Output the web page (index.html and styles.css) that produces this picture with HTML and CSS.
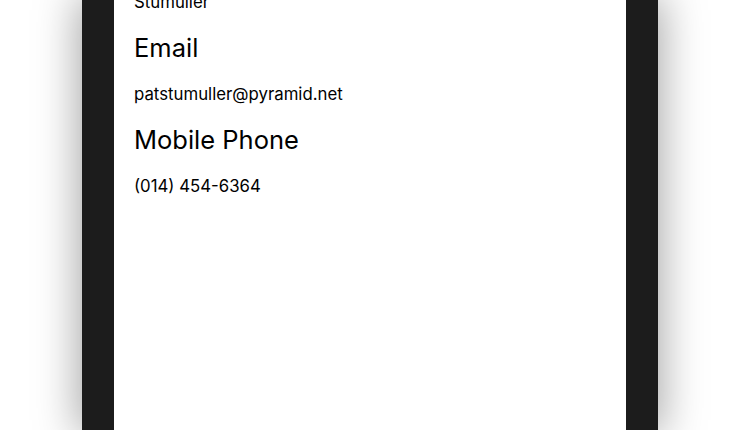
FILE: index.html
```html
<!DOCTYPE html>
<html lang="en">
<head>
<meta charset="utf-8">
<title>Contact</title>
<link rel="stylesheet" href="styles.css">
</head>
<body>
<div class="device">
  <div class="screen">
    <dl class="details">
      <dd class="first">Stumuller</dd>
      <dt>Email</dt>
      <dd>patstumuller@pyramid.net</dd>
      <dt>Mobile Phone</dt>
      <dd>(014) 454-6364</dd>
    </dl>
  </div>
</div>
</body>
</html>
```

FILE: styles.css
```css
html, body {
  margin: 0;
  padding: 0;
  background: #ffffff;
  height: 100%;
  overflow: hidden;
}

body {
  display: flex;
  justify-content: center;
  font-family: "Inter", "Noto Sans", sans-serif;
  color: #000;
}

.device {
  box-sizing: border-box;
  width: 576px;
  height: 430px;
  border-left: 32px solid #1c1c1c;
  border-right: 32px solid #1c1c1c;
  background: #fff;
  box-shadow: 0 0 40px 4px rgba(0, 0, 0, 0.35);
}

.screen {
  padding: 0 20px;
}

.details {
  margin: 0;
  display: flex;
  flex-direction: column;
  gap: 20px;
}

.details dt {
  font-size: 25.5px;
  line-height: 30px;
  font-weight: 400;
}

.details dd {
  margin: 0;
  font-size: 16.8px;
  line-height: 22px;
}

.details .first {
  margin-top: -9px;
}
```
